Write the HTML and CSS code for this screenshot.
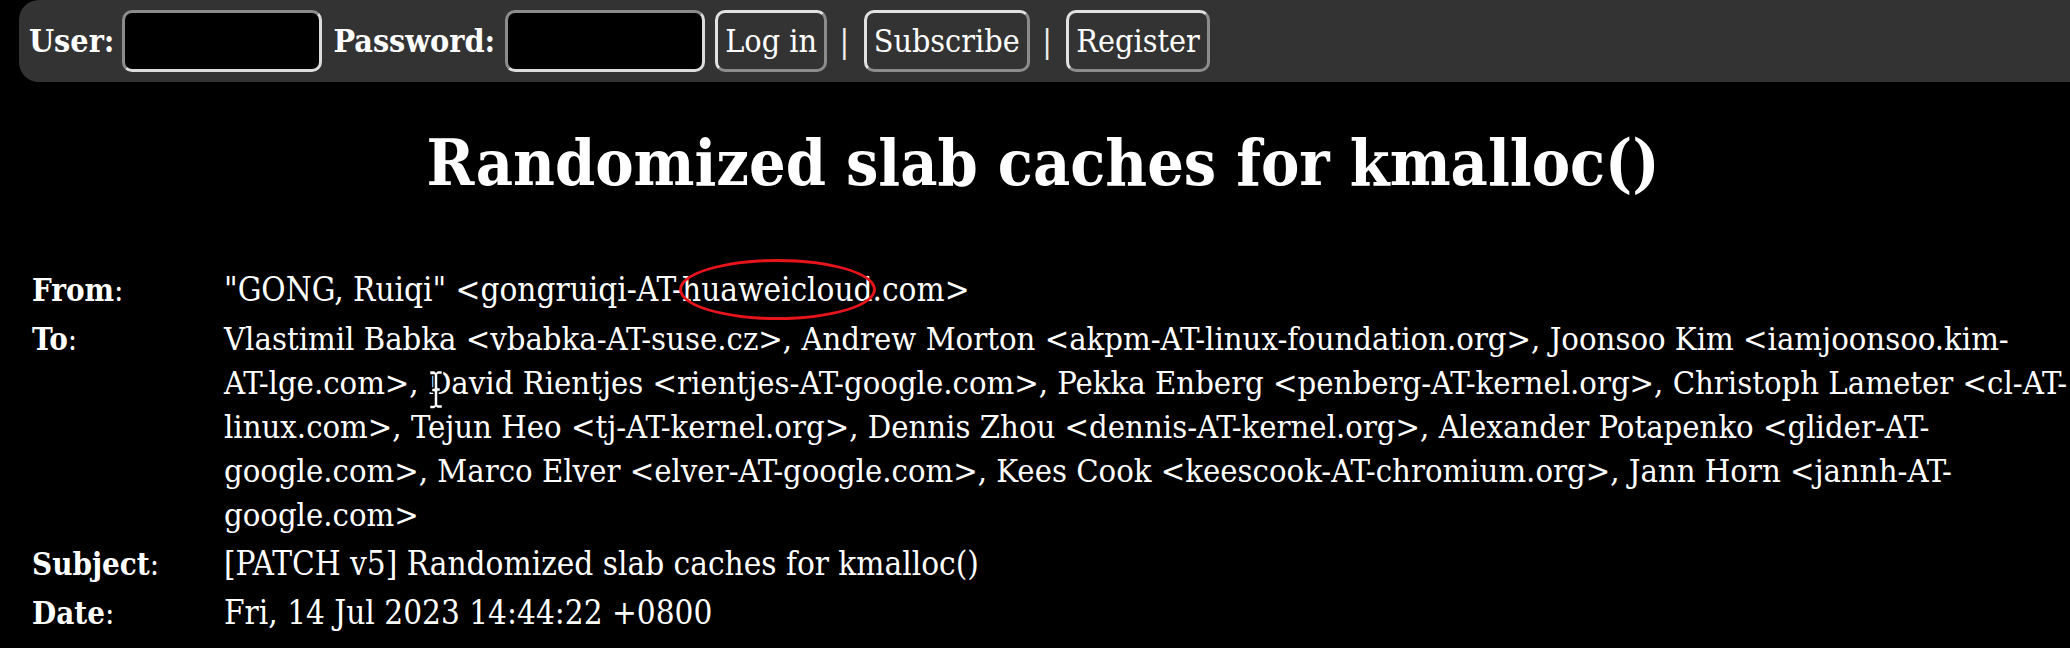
FILE: index.html
```html
<!DOCTYPE html>
<html lang="en">
<head>
<meta charset="utf-8">
<title>Randomized slab caches for kmalloc()</title>
<link rel="stylesheet" href="styles.css">
</head>
<body>
<div class="topbar">
  <form class="login">
    <label class="login-label">User:</label>
    <input class="login-input" type="text">
    <label class="login-label pw">Password:</label>
    <input class="login-input" type="password">
    <button class="bar-btn" type="button">Log in</button>
    <span class="sep">|</span>
    <button class="bar-btn" type="button">Subscribe</button>
    <span class="sep">|</span>
    <button class="bar-btn" type="button">Register</button>
  </form>
</div>

<main class="page">
  <h1 class="title">Randomized slab caches for kmalloc()</h1>
  <table class="headers">
    <tr>
      <td class="hlabel"><b>From</b>:</td>
      <td class="hvalue">"GONG, Ruiqi" &lt;gongruiqi-AT-<span class="circled">huaweicloud</span>.com&gt;</td>
    </tr>
    <tr>
      <td class="hlabel"><b>To</b>:</td>
      <td class="hvalue recipients">Vlastimil Babka &lt;vbabka-AT-suse.cz&gt;, Andrew Morton &lt;akpm-AT-linux-foundation.org&gt;, Joonsoo Kim &lt;iamjoonsoo.kim-<br>AT-lge.com&gt;, David Rientjes &lt;rientjes-AT-google.com&gt;, Pekka Enberg &lt;penberg-AT-kernel.org&gt;, Christoph Lameter &lt;cl-AT-<br>linux.com&gt;, Tejun Heo &lt;tj-AT-kernel.org&gt;, Dennis Zhou &lt;dennis-AT-kernel.org&gt;, Alexander Potapenko &lt;glider-AT-<br>google.com&gt;, Marco Elver &lt;elver-AT-google.com&gt;, Kees Cook &lt;keescook-AT-chromium.org&gt;, Jann Horn &lt;jannh-AT-<br>google.com&gt;</td>
    </tr>
    <tr>
      <td class="hlabel"><b>Subject</b>:</td>
      <td class="hvalue">[PATCH v5] Randomized slab caches for kmalloc()</td>
    </tr>
    <tr>
      <td class="hlabel"><b>Date</b>:</td>
      <td class="hvalue">Fri, 14 Jul 2023 14:44:22 +0800</td>
    </tr>
    <tr>
      <td class="hlabel"><b>Message-ID</b>:</td>
      <td class="hvalue">&lt;20230714064422.3305234-1-gongruiqi@huaweicloud.com&gt;</td>
    </tr>
  </table>
</main>

<svg class="cursor" width="16" height="44" viewBox="0 0 16 44" aria-hidden="true">
  <path d="M1.5 1.5h5l1.5 1.5 1.5-1.5h5v4H10v13h2.5v4H10v13h4.5v4h-5L8 38.5 6.5 40h-5v-4H6v-13H3.5v-4H6v-13H1.5z" fill="#fff" stroke="#000" stroke-width="1.5" stroke-linejoin="round"/>
</svg>
</body>
</html>
```
FILE: styles.css
```css
html, body {
  margin: 0;
  padding: 0;
  background: #000;
  overflow: hidden;
}

body {
  position: relative;
  color: #fff;
  font-family: "DejaVu Serif", "Liberation Serif", serif;
  font-stretch: condensed;
  font-size: 33px;
}

/* ---------- top login bar ---------- */
.topbar {
  height: 82px;
  margin: 0 -40px 0 19px;
  background: #333;
  border-radius: 20px;
  display: flex;
  align-items: center;
  padding-left: 10px;
}

.login {
  display: flex;
  align-items: center;
  gap: 8px;
  margin: 0;
}

.login-label {
  font-weight: bold;
  font-size: 32px;
  color: #fff;
}

.login-label.pw {
  margin: 0 2px 0 1px;
}

.login-input {
  box-sizing: border-box;
  width: 200px;
  height: 62px;
  background: #000;
  color: #fff;
  border: 3px solid;
  border-color: #8c8c8c #dcdcdc #dcdcdc #8c8c8c;
  border-radius: 10px;
  margin: 0 2px 0 0;
  padding: 0 8px;
}

.bar-btn {
  box-sizing: border-box;
  height: 62px;
  padding: 0 7px;
  background: transparent;
  color: #fff;
  font-family: inherit;
  font-stretch: condensed;
  font-size: 32px;
  border: 3px solid;
  border-color: #e2e2e2 #8c8c8c #8c8c8c #e2e2e2;
  border-radius: 10px;
  margin: 0;
}

.sep {
  font-size: 32px;
  color: #eee;
  padding: 0 6.5px 0 4.5px;
}

/* ---------- page ---------- */
.page {
  padding: 0 13px 0 29px;
}

.title {
  margin: 43px 0 64px;
  font-size: 64px;
  line-height: 75px;
  font-weight: bold;
  text-align: center;
}

.headers {
  border-collapse: separate;
  border-spacing: 2px;
  width: 100%;
  table-layout: fixed;
}

.headers td {
  padding: 1.5px 1px;
  vertical-align: top;
  line-height: 44px;
}

.hlabel {
  width: 188px;
  white-space: nowrap;
  font-size: 31px;
}

.hvalue.recipients {
  white-space: nowrap;
  font-size: 32.5px;
}

.circled {
  position: relative;
}

.circled::after {
  content: "";
  position: absolute;
  left: -3px;
  right: -3px;
  top: -11px;
  height: 55px;
  border: 3px solid #e8141b;
  border-radius: 50%;
}

/* mouse cursor captured in the screenshot */
.cursor {
  position: absolute;
  left: 428px;
  top: 369px;
}
```
